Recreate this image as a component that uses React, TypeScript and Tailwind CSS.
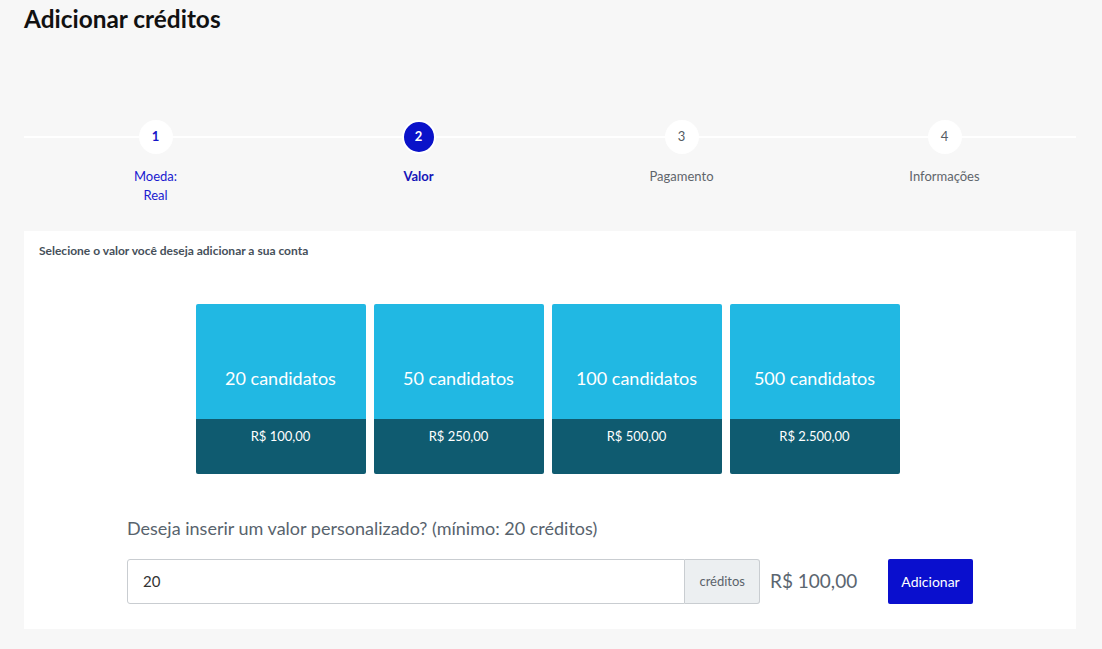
const steps = [
  { n: "1", label: ["Moeda:", "Real"], state: "done" },
  { n: "2", label: ["Valor"], state: "active" },
  { n: "3", label: ["Pagamento"], state: "todo" },
  { n: "4", label: ["Informações"], state: "todo" },
];

const packs = [
  { qty: "20 candidatos", price: "R$ 100,00" },
  { qty: "50 candidatos", price: "R$ 250,00" },
  { qty: "100 candidatos", price: "R$ 500,00" },
  { qty: "500 candidatos", price: "R$ 2.500,00" },
];

export default function App() {
  return (
    <div
      className="min-h-screen w-full bg-[#f7f7f7] pb-5 pl-6 pr-[26px]"
      style={{ fontFamily: "Lato, 'Open Sans', sans-serif" }}
    >
      <h1 className="pt-[4px] text-[24.4px] font-bold leading-[29px] text-[#111]">
        Adicionar créditos
      </h1>

      {/* stepper */}
      <div className="relative mt-[87px] grid grid-cols-4">
        <div className="absolute left-0 right-0 top-[16px] h-[2px] bg-white" />
        {steps.map((s) => (
          <div key={s.n} className="relative flex flex-col items-center">
            <div
              className={
                s.state === "active"
                  ? "flex h-[34px] w-[34px] items-center justify-center rounded-full border-2 border-white bg-[#0a12c9] text-[13px] font-bold text-white"
                  : s.state === "done"
                  ? "flex h-[34px] w-[34px] items-center justify-center rounded-full bg-white text-[13px] font-bold text-[#1515c8]"
                  : "flex h-[34px] w-[34px] items-center justify-center rounded-full bg-white text-[13px] text-[#555c63]"
              }
            >
              {s.n}
            </div>
            <div
              className={
                s.state === "active"
                  ? "mt-[13px] text-center text-[13px] font-bold leading-[19px] text-[#1515b8]"
                  : s.state === "done"
                  ? "mt-[13px] text-center text-[13px] leading-[19px] text-[#1a1ad0]"
                  : "mt-[13px] text-center text-[13px] leading-[19px] text-[#5f656b]"
              }
            >
              {s.label.map((l) => (
                <div key={l}>{l}</div>
              ))}
            </div>
          </div>
        ))}
      </div>

      {/* card */}
      <div className="mt-[26px] bg-white px-[15px] pb-[25px] pt-[12px]">
        <p className="text-[12px] font-bold leading-[16px] text-[#46505a]">
          Selecione o valor você deseja adicionar a sua conta
        </p>

        <div className="mt-[45px] flex justify-center gap-2 pr-[5px]">
          {packs.map((p) => (
            <div
              key={p.qty}
              className="flex h-[170px] w-[170px] flex-col overflow-hidden rounded-[2px]"
            >
              <div className="flex h-[115px] items-start justify-center bg-[#21b8e3] pt-[62px] text-[18px] leading-[24px] text-white">
                {p.qty}
              </div>
              <div className="flex flex-1 items-start justify-center bg-[#0f5b70] pt-[9px] text-[13px] leading-[16px] text-white">
                {p.price}
              </div>
            </div>
          ))}
        </div>

        <div className="mx-auto mt-[42px] w-[846px]">
          <p className="text-[18px] leading-[24px] text-[#58636d]">
            Deseja inserir um valor personalizado? (mínimo: 20 créditos)
          </p>
          <div className="mt-[19px] flex items-center">
            <div className="flex h-[45px] w-[633px]">
              <div className="flex flex-1 items-center rounded-l-[3px] border border-[#c9cdd1] px-[15px] text-[15px] text-[#333]">
                20
              </div>
              <div className="flex items-center rounded-r-[3px] border border-l-0 border-[#c9cdd1] bg-[#eceff1] px-[14px] text-[13px] text-[#5b636b]">
                créditos
              </div>
            </div>
            <div className="ml-[10px] text-[19px] text-[#5b6670]">R$ 100,00</div>
            <button className="ml-auto h-[45px] w-[85px] rounded-[2px] bg-[#0a0fce] text-[14px] text-white">
              Adicionar
            </button>
          </div>
        </div>
      </div>
    </div>
  );
}
